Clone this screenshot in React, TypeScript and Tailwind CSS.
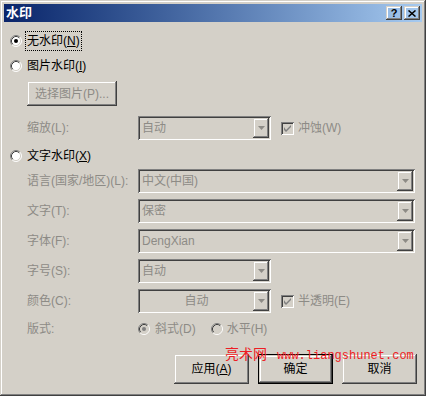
import React from 'react';

const raised =
	'shadow-[inset_-1px_-1px_#404040,inset_1px_1px_#d4d0c8,inset_-2px_-2px_#808080,inset_2px_2px_#ffffff]';
const sunken =
	'shadow-[inset_1px_1px_#808080,inset_-1px_-1px_#ffffff,inset_2px_2px_#404040,inset_-2px_-2px_#d4d0c8]';
const dim = 'text-[#8d8b86]';

const Radio = ({ on, disabled }: { on?: boolean; disabled?: boolean }) => (
	<svg width="12" height="12" viewBox="0 0 12 12" className="shrink-0">
		<circle cx="6" cy="6" r="5" fill={disabled ? '#d4d0c8' : '#ffffff'} />
		<path d="M2.11 9.89 A5.5 5.5 0 0 1 9.89 2.11" stroke="#808080" fill="none" />
		<path d="M9.89 2.11 A5.5 5.5 0 0 1 2.11 9.89" stroke="#ffffff" fill="none" />
		<path d="M2.82 9.18 A4.5 4.5 0 0 1 9.18 2.82" stroke="#404040" fill="none" />
		<path d="M9.18 2.82 A4.5 4.5 0 0 1 2.82 9.18" stroke="#d4d0c8" fill="none" />
		{on && <circle cx="6" cy="6" r="2" fill={disabled ? '#808080' : '#000000'} />}
	</svg>
);

const Check = () => (
	<div className={`w-[13px] h-[13px] shrink-0 bg-[#d4d0c8] ${sunken} flex items-center justify-center`}>
		<svg width="7" height="7" viewBox="0 0 7 7">
			<path d="M0 2 L0 5 L2 7 L7 2 L7 0 L2 5 Z" fill="#808080" />
		</svg>
	</div>
);

const Combo = ({ w, text, center }: { w: string; text: string; center?: boolean }) => (
	<div className={`${w} h-[24px] flex p-[2px] bg-[#d4d0c8] ${sunken}`}>
		<div className={`flex-1 flex items-center px-[2px] ${dim} ${center ? 'justify-center' : ''}`}>{text}</div>
		<div className={`w-[16px] h-full ${raised} flex items-center justify-center`}>
			<svg width="7" height="4" viewBox="0 0 7 4">
				<path d="M0 0 H7 L3.5 4 Z" fill="#8d8b86" />
			</svg>
		</div>
	</div>
);

const Row = ({ label, children }: { label: string; children: React.ReactNode }) => (
	<div className="flex items-center h-[24px] mt-[6px]">
		<div className={`w-[111px] pl-[27px] ${dim}`}>{label}</div>
		{children}
	</div>
);

const Btn = ({ label, def }: { label: React.ReactNode; def?: boolean }) => (
	<div className={`w-[75px] h-[30px] ${def ? 'border border-black' : ''}`}>
		<div className={`w-full h-full ${raised} flex items-center justify-center`}>{label}</div>
	</div>
);

export default function App() {
	return (
		<div className="relative w-[426px] h-[396px] bg-[#d4d0c8] p-[4px] text-[12px] text-black font-['Liberation_Sans','Noto_Sans_CJK_SC',sans-serif] shadow-[inset_-1px_-1px_#404040,inset_1px_1px_#d4d0c8,inset_-2px_-2px_#808080,inset_2px_2px_#ffffff]">
			<div className="h-[18px] flex items-center pl-[2px] pr-[2px] bg-gradient-to-r from-[#0a246a] to-[#a6caf0]">
				<span className="flex-1 text-white font-bold text-[13px]">水印</span>
				<div className="flex gap-[2px]">
					<div className={`w-[16px] h-[14px] ${raised} flex items-center justify-center font-bold text-[11px] leading-none`}>?</div>
					<div className={`w-[16px] h-[14px] ${raised} flex items-center justify-center`}>
						<svg width="8" height="7" viewBox="0 0 8 7">
							<path d="M0.5 0.5 L7.5 6.5 M7.5 0.5 L0.5 6.5" stroke="#000" strokeWidth="1.5" />
						</svg>
					</div>
				</div>
			</div>

			<div className="flex flex-col">
				<div className="flex items-center h-[20px] mt-[9px] pl-[6px]">
					<Radio on />
					<span className="ml-[3px] px-[1px] h-[20px] flex items-center border border-dotted border-black">
						无水印(<span className="underline">N</span>)
					</span>
				</div>
				<div className="flex items-center h-[20px] mt-[5px] pl-[6px]">
					<Radio />
					<span className="ml-[5px]">
						图片水印(<span className="underline">I</span>)
					</span>
				</div>
				<div className="pl-[23px] mt-[5px]">
					<div className={`w-[90px] h-[25px] ${raised} flex items-center justify-center ${dim}`}>选择图片(P)...</div>
				</div>
				<div className="flex items-center h-[24px] mt-[10px]">
					<div className={`w-[134px] pl-[23px] ${dim}`}>缩放(L):</div>
					<Combo w="w-[133px]" text="自动" />
					<div className="ml-[10px]">
						<Check />
					</div>
					<span className={`ml-[4px] ${dim}`}>冲蚀(W)</span>
				</div>
				<div className="flex items-center h-[20px] mt-[6px] pl-[6px]">
					<Radio />
					<span className="ml-[5px]">
						文字水印(<span className="underline">X</span>)
					</span>
				</div>
				<div className="flex items-center h-[24px] mt-[3px]">
					<div className={`w-[134px] pl-[23px] ${dim}`}>语言(国家/地区)(L):</div>
					<Combo w="w-[277px]" text="中文(中国)" />
				</div>
				<div className="flex items-center h-[24px] mt-[6px]">
					<div className={`w-[134px] pl-[23px] ${dim}`}>文字(T):</div>
					<Combo w="w-[277px]" text="保密" />
				</div>
				<div className="flex items-center h-[24px] mt-[6px]">
					<div className={`w-[134px] pl-[23px] ${dim}`}>字体(F):</div>
					<Combo w="w-[277px]" text="DengXian" />
				</div>
				<div className="flex items-center h-[24px] mt-[6px]">
					<div className={`w-[134px] pl-[23px] ${dim}`}>字号(S):</div>
					<Combo w="w-[133px]" text="自动" />
				</div>
				<div className="flex items-center h-[24px] mt-[6px]">
					<div className={`w-[134px] pl-[23px] ${dim}`}>颜色(C):</div>
					<Combo w="w-[133px]" text="自动" center />
					<div className="ml-[10px]">
						<Check />
					</div>
					<span className={`ml-[4px] ${dim}`}>半透明(E)</span>
				</div>
				<div className="flex items-center h-[20px] mt-[6px]">
					<div className={`w-[134px] pl-[23px] ${dim}`}>版式:</div>
					<Radio on disabled />
					<span className={`ml-[5px] ${dim}`}>斜式(D)</span>
					<div className="ml-[15px]">
						<Radio disabled />
					</div>
					<span className={`ml-[4px] ${dim}`}>水平(H)</span>
				</div>
				<div className="flex justify-end gap-[9px] mt-[15px] pr-[5px]">
					<Btn label={<span>应用(<span className="underline">A</span>)</span>} />
					<Btn label="确定" def />
					<Btn label="取消" />
				</div>
			</div>

			<div className="absolute left-[225px] top-[343px] flex items-baseline text-[#ee1c24] whitespace-nowrap">
				<span className="text-[14px] font-['Noto_Sans_CJK_SC',serif]">亮术网</span>
				<span className="ml-[10px] text-[12px] font-['Liberation_Mono',monospace]">www.liangshunet.com</span>
			</div>
		</div>
	);
}
